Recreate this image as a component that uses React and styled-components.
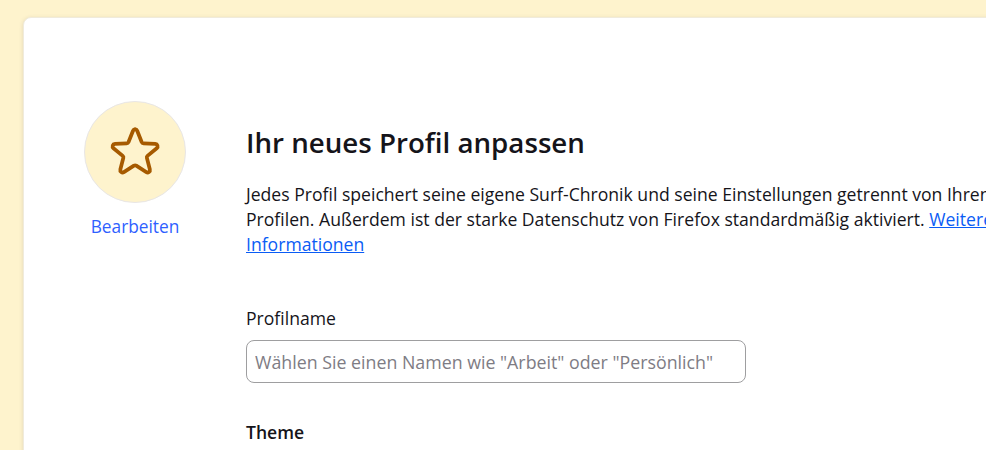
import React from 'react';
import styled, { createGlobalStyle } from 'styled-components';

const GlobalStyle = createGlobalStyle`
  html, body {
    margin: 0;
    height: 100%;
    overflow: hidden;
    background-color: #fef3cd;
  }
  * {
    box-sizing: border-box;
  }
`;

const Page = styled.div`
  width: 986px;
  height: 450px;
  overflow: hidden;
  padding: 17px 0 0 23px;
  font-family: "Open Sans", "Noto Sans", sans-serif;
  color: #15141a;
`;

const Card = styled.main`
  width: 1100px;
  min-height: 600px;
  background-color: #fff;
  border: 1px solid #f0ebdc;
  border-radius: 8px;
  box-shadow: 0 1px 4px rgba(58, 57, 68, 0.15);
  padding: 83px 0 0 60px;
  display: flex;
  gap: 60px;
`;

const AvatarColumn = styled.div`
  width: 102px;
  flex: none;
  display: flex;
  flex-direction: column;
  align-items: center;
  gap: 11px;
`;

const Avatar = styled.div`
  width: 102px;
  height: 102px;
  border-radius: 50%;
  background-color: #fef3cd;
  border: 1px solid #e8e6e6;
  display: flex;
  align-items: center;
  justify-content: center;
  color: #a65a00;
`;

const EditLink = styled.a`
  font-size: 17.3px;
  line-height: 25px;
  color: #2f5fff;
`;

const Content = styled.div`
  width: 830px;
  padding-top: 22px;
`;

const Title = styled.h1`
  margin: 0;
  font-size: 27.7px;
  line-height: 38px;
  font-weight: 600;
`;

const Intro = styled.p`
  margin: 21px 0 0;
  font-size: 17.6px;
  line-height: 25px;
`;

const TextLink = styled.a`
  color: #0a5cf5;
  text-decoration: underline;
`;

const Field = styled.div`
  margin-top: 49px;
  display: flex;
  flex-direction: column;
  gap: 10px;
`;

const Label = styled.label`
  font-size: 17.6px;
  line-height: 24px;
`;

const NameInput = styled.input`
  width: 500px;
  height: 43px;
  padding: 0 8px;
  border: 1px solid #9e9ea0;
  border-radius: 8px;
  background-color: #fff;
  font-family: inherit;
  font-size: 17.8px;
  color: #15141a;
  &::placeholder {
    color: #7e7c84;
    opacity: 1;
  }
`;

const SectionTitle = styled.h2`
  margin: 37px 0 0;
  font-size: 17.6px;
  line-height: 24px;
  font-weight: 600;
`;

const StarIcon = () => (
  <svg width="52" height="50" viewBox="0 0 50 48" fill="none" stroke="currentColor" strokeWidth="3.6" strokeLinejoin="round">
    <path d="M25 2c1 0 1.700.6 2.100 1.600l4.300 10.800c.3.7.9 1.200 1.700 1.200l11.400.7c2.200.1 3 2.700 1.400 4.100l-8.900 7.300c-.6.5-.8 1.200-.6 1.900l2.900 11.200c.5 2-1.600 3.600-3.400 2.500l-9.700-6.200c-.7-.4-1.500-.4-2.200 0l-9.700 6.200c-1.800 1.100-3.900-.5-3.400-2.500l2.900-11.200c.2-.7 0-1.400-.6-1.900l-8.900-7.300c-1.600-1.400-.8-4 1.400-4.100l11.400-.7c.8 0 1.400-.5 1.700-1.200l4.300-10.800c.4-1 1.100-1.600 2.100-1.600z" />
  </svg>
);

const App = () => (
  <>
    <GlobalStyle />
    <Page>
      <Card>
        <AvatarColumn>
          <Avatar>
            <StarIcon />
          </Avatar>
          <EditLink>Bearbeiten</EditLink>
        </AvatarColumn>
        <Content>
          <Title>Ihr neues Profil anpassen</Title>
          <Intro>
            Jedes Profil speichert seine eigene Surf-Chronik und seine Einstellungen getrennt von Ihren anderen Profilen. Außerdem ist der starke Datenschutz von Firefox standardmäßig aktiviert. <TextLink href="#">Weitere Informationen</TextLink>
          </Intro>
          <Field>
            <Label htmlFor="profile-name">Profilname</Label>
            <NameInput id="profile-name" placeholder={'Wählen Sie einen Namen wie "Arbeit" oder "Persönlich"'} />
          </Field>
          <SectionTitle>Theme</SectionTitle>
        </Content>
      </Card>
    </Page>
  </>
);

export default App;
